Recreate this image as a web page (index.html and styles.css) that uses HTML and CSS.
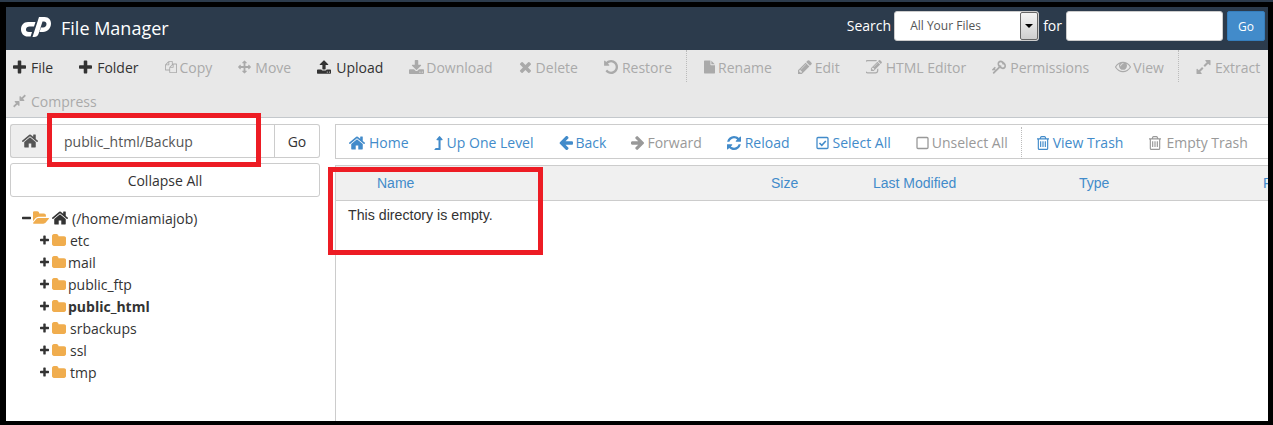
FILE: index.html
```html
<!DOCTYPE html>
<html lang="en">
<head>
<meta charset="utf-8">
<title>File Manager</title>
<link rel="stylesheet" href="styles.css">
</head>
<body>
<svg class="defs" aria-hidden="true">
<symbol id="plus" viewBox="192 128 1408 1408"><path d="M1600 736v192q0 40-28 68t-68 28h-416v416q0 40-28 68t-68 28h-192q-40 0-68-28t-28-68v-416h-416q-40 0-68-28t-28-68v-192q0-40 28-68t68-28h416v-416q0-40 28-68t68-28h192q40 0 68 28t28 68v416h416q40 0 68 28t28 68z"/></symbol>
<symbol id="minus" viewBox="192 640 1408 384"><path d="M1600 736v192q0 40-28 68t-68 28h-1216q-40 0-68-28t-28-68v-192q0-40 28-68t68-28h1216q40 0 68 28t28 68z"/></symbol>
<symbol id="home" viewBox="96 256 1600 1280"><path d="M1472 992v480q0 26-19 45t-45 19h-384v-384h-256v384h-384q-26 0-45-19t-19-45v-480q0-1 .5-3t.5-3l575-474 575 474q1 2 1 6zm223-69l-62 74q-8 9-21 11h-3q-13 0-21-7l-692-577-692 577q-12 8-24 7-13-2-21-11l-62-74q-8-10-7-23.500t11-21.500l719-599q32-26 76-26t76 26l244 204v-195q0-14 9-23t23-9h192q14 0 23 9t9 23v408l219 182q10 8 11 21.500t-7 23.500z"/></symbol>
<symbol id="folder" viewBox="64 128 1664 1408"><path d="M1728 608v704q0 92-66 158t-158 66h-1216q-92 0-158-66t-66-158v-960q0-92 66-158t158-66h320q92 0 158 66t66 158v32h672q92 0 158 66t66 158z"/></symbol>
<symbol id="folder-open" viewBox="0 192 1820 1408"><path d="M1815 952q0 31-31 66l-336 396q-43 51-120.500 86.500t-143.500 35.500h-1088q-34 0-60.500-13t-26.500-43q0-31 31-66l336-396q43-51 120.500-86.500t143.500-35.500h1088q34 0 60.500 13t26.500 43zm-343-344v160h-832q-94 0-197 47.500t-164 119.500l-337 396-5 6q0-4-.5-12.500t-.500-12.500v-960q0-92 66-158t158-66h320q92 0 158 66t66 158v32h544q92 0 158 66t66 158z"/></symbol>
<symbol id="files" viewBox="0 0 1792 1792"><path d="M1696 384q40 0 68 28t28 68v1216q0 40-28 68t-68 28h-960q-40 0-68-28t-28-68v-288h-544q-40 0-68-28t-28-68v-672q0-40 20-88t48-76l408-408q28-28 76-48t88-20h416q40 0 68 28t28 68v328q68-40 128-40h416zm-544 213l-299 299h299v-299zm-640-384l-299 299h299v-299zm196 647l316-316v-416h-384v416q0 40-28 68t-68 28h-416v640h512v-256q0-40 20-88t48-76zm956 804v-1152h-384v416q0 40-28 68t-68 28h-416v640h896z"/></symbol>
<symbol id="arrows" viewBox="0 0 1792 1792"><path d="M1792 896q0 26-19 45l-256 256q-19 19-45 19t-45-19-19-45v-128h-384v384h128q26 0 45 19t19 45-19 45l-256 256q-19 19-45 19t-45-19l-256-256q-19-19-19-45t19-45 45-19h128v-384h-384v128q0 26-19 45t-45 19-45-19l-256-256q-19-19-19-45t19-45l256-256q19-19 45-19t45 19 19 45v128h384v-384h-128q-26 0-45-19t-19-45 19-45l256-256q19-19 45-19t45 19l256 256q19 19 19 45t-19 45-45 19h-128v384h384v-128q0-26 19-45t45-19 45 19l256 256q19 19 19 45z"/></symbol>
<symbol id="upload" viewBox="64 64 1664 1600"><path d="M1344 1472q0-26-19-45t-45-19-45 19-19 45 19 45 45 19 45-19 19-45zm256 0q0-26-19-45t-45-19-45 19-19 45 19 45 45 19 45-19 19-45zm128-224v320q0 40-28 68t-68 28h-1472q-40 0-68-28t-28-68v-320q0-40 28-68t68-28h427q21 56 70.500 92t110.500 36h256q61 0 110.500-36t70.500-92h427q40 0 68 28t28 68zm-325-648q-17 40-59 40h-256v448q0 26-19 45t-45 19h-256q-26 0-45-19t-19-45v-448h-256q-42 0-59-40-17-39 14-69l448-448q18-19 45-19t45 19l448 448q31 30 14 69z"/></symbol>
<symbol id="download" viewBox="64 0 1664 1536"><path d="M1344 1344q0-26-19-45t-45-19-45 19-19 45 19 45 45 19 45-19 19-45zm256 0q0-26-19-45t-45-19-45 19-19 45 19 45 45 19 45-19 19-45zm128-224v320q0 40-28 68t-68 28h-1472q-40 0-68-28t-28-68v-320q0-40 28-68t68-28h465l135 136q58 56 136 56t136-56l136-136h464q40 0 68 28t28 68zm-325-569q17 41-14 70l-448 448q-18 19-45 19t-45-19l-448-448q-31-29-14-70 17-39 59-39h256v-448q0-26 19-45t45-19h256q26 0 45 19t19 45v448h256q42 0 59 39z"/></symbol>
<symbol id="times" viewBox="202 242 1288 1312"><path d="M1490 1322q0 40-28 68l-136 136q-28 28-68 28t-68-28l-294-294-294 294q-28 28-68 28t-68-28l-136-136q-28-28-28-68t28-68l294-294-294-294q-28-28-28-68t28-68l136-136q28-28 68-28t68 28l294 294 294-294q28-28 68-28t68 28l136 136q28 28 28 68t-28 68l-294 294 294 294q28 28 28 68z"/></symbol>
<symbol id="undo" viewBox="120 128 1544 1536"><path d="M1664 896q0 156-61 298t-164 245-245 164-298 61q-172 0-327-72.500t-264-204.500q-7-10-6.500-22.500t8.500-20.500l137-138q10-9 25-9 16 2 23 12 73 95 179 147t225 52q104 0 198.500-40.500t163.500-109.500 109.500-163.500 40.500-198.500-40.500-198.500-109.500-163.500-163.500-109.500-198.500-40.500q-98 0-188 35.500t-160 101.500l137 138q31 30 14 69-17 40-59 40h-448q-26 0-45-19t-19-45v-448q0-42 40-59 39-17 69 14l130 129q107-101 244.500-156.500t284.500-55.500q156 0 298 61t245 164 164 245 61 298z"/></symbol>
<symbol id="file" viewBox="128 0 1536 1792"><path d="M1152 512v-472q22 14 36 28l408 408q14 14 28 36h-472zm-128 32q0 40 28 68t68 28h544v1056q0 40-28 68t-68 28h-1344q-40 0-68-28t-28-68v-1600q0-40 28-68t68-28h800v544z"/></symbol>
<symbol id="pencil" viewBox="128 128 1536 1536"><path d="M491 1536l91-91-235-235-91 91v107h128v128h107zm523-928q0-22-22-22-10 0-17 7l-542 542q-7 7-7 17 0 22 22 22 10 0 17-7l542-542q7-7 7-17zm-54-192l416 416-832 832h-416v-416zm683 96q0 53-37 90l-166 166-416-416 166-165q36-38 90-38 53 0 91 38l235 234q37 39 37 91z"/></symbol>
<symbol id="edit" viewBox="128 192 1664 1344"><path d="M888 1184l116-116-152-152-116 116v56h96v96h56zm440-720q-16-16-33 1l-350 350q-17 17-1 33t33-1l350-350q17-17 1-33zm80 594v190q0 119-84.500 203.500t-203.500 84.500h-832q-119 0-203.500-84.500t-84.500-203.500v-832q0-119 84.500-203.500t203.500-84.500h832q63 0 117 25 15 7 18 23 3 17-9 29l-49 49q-14 14-32 8-23-6-45-6h-832q-66 0-113 47t-47 113v832q0 66 47 113t113 47h832q66 0 113-47t47-113v-126q0-13 9-22l64-64q15-15 35-7t20 29zm-96-738l288 288-672 672h-288v-288zm444 132l-92 92-288-288 92-92q28-28 68-28t68 28l152 152q28 28 28 68t-28 68z"/></symbol>
<symbol id="key" viewBox="0 128 1683 1536"><path transform="matrix(-1 0 0 1 1683 0)" d="M832 512q0-80-56-136t-136-56-136 56-56 136q0 42 19 83-41-19-83-19-80 0-136 56t-56 136 56 136 136 56 136-56 56-136q0-42-19-83 41 19 83 19 80 0 136-56t56-136zm851 704q0 17-49 66t-66 49q-9 0-28.500-16t-36.500-33-38.500-40-24.500-26l-96 96 220 220q28 28 28 68 0 42-39 81t-81 39q-40 0-68-28l-671-671q-176 131-365 131-163 0-265.500-102.500t-102.500-265.500q0-160 95-313t248-248 313-95q163 0 265.500 102.500t102.500 265.500q0 189-131 365l355 355 96-96q-2-2-26-24.500t-40-38.500-33-36.500-16-28.500q0-17 49-66t66-49q13 0 23 10 6 6 46 44.500t82 79.500 86.500 86 73 78 28.500 41z"/></symbol>
<symbol id="eye" viewBox="0 384 1792 1152"><path d="M1664 960q-152-236-381-353 61 104 61 225 0 185-131.500 316.500t-316.500 131.500-316.500-131.500-131.500-316.500q0-121 61-225-229 117-381 353 133 205 333.500 326.500t434.500 121.500 434.500-121.500 333.500-326.500zm-720-384q0-20-14-34t-34-14q-125 0-214.500 89.500t-89.500 214.500q0 20 14 34t34 14 34-14 14-34q0-86 61-147t147-61q20 0 34-14t14-34zm848 384q0 34-20 69-140 230-376.500 368.500t-499.500 138.500-499.500-139-376.500-368q-20-35-20-69t20-69q140-229 376.500-368t499.500-139 499.500 139 376.500 368q20 35 20 69z"/></symbol>
<symbol id="expand" viewBox="128 128 1536 1536"><path d="M883 1056q0 13-10 23l-332 332 144 144q19 19 19 45t-19 45-45 19h-448q-26 0-45-19t-19-45v-448q0-26 19-45t45-19 45 19l144 144 332-332q10-10 23-10t23 10l114 114q10 10 10 23zm781-864v448q0 26-19 45t-45 19-45-19l-144-144-332 332q-10 10-23 10t-23-10l-114-114q-10-10-10-23t10-23l332-332-144-144q-19-19-19-45t19-45 45-19h448q26 0 45 19t19 45z"/></symbol>
<symbol id="compress" viewBox="128 128 1536 1536"><path d="M896 960v448q0 26-19 45t-45 19-45-19l-144-144-332 332q-10 10-23 10t-23-10l-114-114q-10-10-10-23t10-23l332-332-144-144q-19-19-19-45t19-45 45-19h448q26 0 45 19t19 45zm755-672q0 13-10 23l-332 332 144 144q19 19 19 45t-19 45-45 19h-448q-26 0-45-19t-19-45v-448q0-26 19-45t45-19 45 19l144 144 332-332q10-10 23-10t23 10l114 114q10 10 10 23z"/></symbol>
<symbol id="level-up" viewBox="368 32 1040 1728"><path d="M1395 508q-17 36-58 36h-192v1184q0 14-9 23t-23 9h-704q-21 0-29-18-8-20 4-35l160-192q9-11 25-11h320v-960h-192q-40 0-58-37-17-37 9-68l320-384q18-22 49-22t49 22l320 384q27 32 9 69z"/></symbol>
<symbol id="arrow-left" viewBox="128 256 1536 1408"><path d="M1664 896v128q0 53-32.500 90.500t-84.500 37.500h-704l293 294q38 36 38 90t-38 90l-75 76q-37 37-90 37-52 0-91-37l-651-652q-37-37-37-90 0-52 37-91l651-650q38-38 91-38 52 0 90 38l75 74q38 38 38 91t-38 91l-293 293h704q52 0 84.500 37.500t32.500 90.500z"/></symbol>
<symbol id="arrow-right" viewBox="128 256 1472 1408"><path d="M1600 960q0 54-37 91l-651 651q-39 37-91 37-51 0-90-37l-75-75q-38-38-38-91t38-91l293-293h-704q-52 0-84.500-37.500t-32.500-90.500v-128q0-53 32.500-90.500t84.500-37.500h704l-293-294q-38-36-38-90t38-90l75-75q38-38 90-38 53 0 91 38l651 651q37 35 37 90z"/></symbol>
<symbol id="refresh" viewBox="128 128 1536 1536"><path d="M1639 1056q0 5-1 7-64 268-268 434.500t-478 166.500q-146 0-282.500-55t-243.500-157l-129 129q-19 19-45 19t-45-19-19-45v-448q0-26 19-45t45-19h448q26 0 45 19t19 45-19 45l-137 137q71 66 161 102t187 36q134 0 250-65t186-179q11-17 53-117 8-23 30-23h192q13 0 22.500 9.500t9.500 22.500zm25-800v448q0 26-19 45t-45 19h-448q-26 0-45-19t-19-45 19-45l138-138q-148-137-349-137-134 0-250 65t-186 179q-11 17-53 117-8 23-30 23h-199q-13 0-22.500-9.500t-9.500-22.500v-7q65-268 270-434.500t480-166.500q146 0 284 55.500t245 156.500l130-129q19-19 45-19t45 19 19 45z"/></symbol>
<symbol id="trash" viewBox="256 128 1280 1536"><path d="M704 736v576q0 14-9 23t-23 9h-64q-14 0-23-9t-9-23v-576q0-14 9-23t23-9h64q14 0 23 9t9 23zm256 0v576q0 14-9 23t-23 9h-64q-14 0-23-9t-9-23v-576q0-14 9-23t23-9h64q14 0 23 9t9 23zm256 0v576q0 14-9 23t-23 9h-64q-14 0-23-9t-9-23v-576q0-14 9-23t23-9h64q14 0 23 9t9 23zm128 724v-948h-896v948q0 22 7 40.500t14.500 27 10.500 8.500h832q3 0 10.500-8.500t14.500-27 7-40.500zm-672-1076h448l-48-117q-7-9-17-11h-317q-10 2-17 11zm928 32v64q0 14-9 23t-23 9h-96v948q0 83-47 143.500t-113 60.500h-832q-66 0-113-58.500t-47-141.500v-952h-96q-14 0-23-9t-9-23v-64q0-14 9-23t23-9h309l70-167q15-37 54-63t79-26h320q40 0 79 26t54 63l70 167h309q14 0 23 9t9 23z"/></symbol>
<symbol id="square" viewBox="0 0 13 13"><rect x="1" y="1" width="11" height="11" rx="1" fill="none" stroke="currentColor" stroke-width="1.300"/></symbol>
<symbol id="check-square" viewBox="0 0 13 13"><rect x="1" y="1" width="11" height="11" rx="1" fill="none" stroke="currentColor" stroke-width="1.300"/><path d="M3.500 6.500l2.300 2.300 4-4.300" fill="none" stroke="currentColor" stroke-width="1.600"/></symbol>
</svg>
<div class="strip"></div>
<div class="shot">
  <header class="topbar">
    <svg class="logo" viewBox="0 0 30 20" aria-label="cPanel"><path d="M14.500 5H7C2.500 5 0 8.500 0 12.300 0 16.300 2.500 19.600 7 19.600H9.600L11 15H8C5.800 15 4.700 13.700 5 12.200 5.300 10.600 6.500 9.500 8.500 9.500H13Z"/><path d="M18 0H23.500C28 0 30 3 30 6.500 30 11 26.500 15 22 15H18.500L20 10.500H22C24 10.500 25.500 9 25.500 7 25.500 5.500 24.500 4.500 23 4.500H21.500L17.500 17C16.800 19 15.500 20 13 20H11.500Z"/></svg>
    <h1 class="app-title">File Manager</h1>
    <form class="search">
      <label class="search-label">Search</label>
      <div class="picker"><span class="picker-value">All Your Files</span><span class="picker-btn"></span></div>
      <label class="search-label">for</label>
      <input class="search-input" type="text">
      <button class="go-primary" type="button">Go</button>
    </form>
  </header>
  <nav class="actions">
    <a class="act on"><svg class="ic w13 m5"><use href="#plus"/></svg>File</a>
    <a class="act on"><svg class="ic w13 m5"><use href="#plus"/></svg>Folder</a>
    <a class="act"><svg class="ic w12 m3"><use href="#files"/></svg>Copy</a>
    <a class="act"><svg class="ic w13 m4"><use href="#arrows"/></svg>Move</a>
    <a class="act on"><svg class="ic w14 m5"><use href="#upload"/></svg>Upload</a>
    <a class="act"><svg class="ic w15 m2"><use href="#download"/></svg>Download</a>
    <a class="act"><svg class="ic w12 m5"><use href="#times"/></svg>Delete</a>
    <a class="act act-last"><svg class="ic w14 m4"><use href="#undo"/></svg>Restore</a>
    <span class="dots"></span>
    <a class="act"><svg class="ic w11 m3"><use href="#file"/></svg>Rename</a>
    <a class="act"><svg class="ic w14 m3"><use href="#pencil"/></svg>Edit</a>
    <a class="act"><svg class="ic w16 m4"><use href="#edit"/></svg>HTML Editor</a>
    <a class="act"><svg class="ic w14 m4"><use href="#key"/></svg>Permissions</a>
    <a class="act act-last"><svg class="ic w16 m2"><use href="#eye"/></svg>View</a>
    <span class="dots"></span>
    <a class="act act-end"><svg class="ic w15 m4"><use href="#expand"/></svg>Extract</a>
    <a class="act"><svg class="ic w13 m5"><use href="#compress"/></svg>Compress</a>
  </nav>
  <div class="panes">
    <aside class="side">
      <div class="pathbar">
        <span class="path-home"><svg class="ic w16"><use href="#home"/></svg></span>
        <input class="path-input" type="text" value="public_html/Backup">
        <button class="path-go" type="button">Go</button>
      </div>
      <button class="collapse" type="button">Collapse All</button>
      <ul class="tree">
        <li class="root"><svg class="ic w9 m2"><use href="#minus"/></svg><svg class="ic w16 m3 amber"><use href="#folder-open"/></svg><svg class="ic w16 m4"><use href="#home"/></svg>(/home/miamiajob)</li>
        <li class="node"><svg class="ic w9 m3"><use href="#plus"/></svg><svg class="ic w14 m4 amber"><use href="#folder"/></svg>etc</li>
        <li class="node"><svg class="ic w9 m3"><use href="#plus"/></svg><svg class="ic w14 m2 amber"><use href="#folder"/></svg>mail</li>
        <li class="node"><svg class="ic w9 m3"><use href="#plus"/></svg><svg class="ic w14 m2 amber"><use href="#folder"/></svg>public_ftp</li>
        <li class="node current"><svg class="ic w9 m3"><use href="#plus"/></svg><svg class="ic w14 m2 amber"><use href="#folder"/></svg>public_html</li>
        <li class="node"><svg class="ic w9 m3"><use href="#plus"/></svg><svg class="ic w14 m4 amber"><use href="#folder"/></svg>srbackups</li>
        <li class="node"><svg class="ic w9 m3"><use href="#plus"/></svg><svg class="ic w14 m4 amber"><use href="#folder"/></svg>ssl</li>
        <li class="node"><svg class="ic w9 m3"><use href="#plus"/></svg><svg class="ic w14 m4 amber"><use href="#folder"/></svg>tmp</li>
      </ul>
    </aside>
    <main class="content">
      <nav class="navbar">
        <a class="nav on"><svg class="ic w16 m4"><use href="#home"/></svg>Home</a>
        <a class="nav on"><svg class="ic w9 m4"><use href="#level-up"/></svg>Up One Level</a>
        <a class="nav on"><svg class="ic w14 m3"><use href="#arrow-left"/></svg>Back</a>
        <a class="nav"><svg class="ic w13 m3"><use href="#arrow-right"/></svg>Forward</a>
        <a class="nav nav-reload on"><svg class="ic w14 m4"><use href="#refresh"/></svg>Reload</a>
        <a class="nav on"><svg class="ic w13 m4"><use href="#check-square"/></svg>Select All</a>
        <a class="nav nav-last"><svg class="ic w13 m3"><use href="#square"/></svg>Unselect All</a>
        <span class="dots nav-dots"></span>
        <a class="nav nav-trash on"><svg class="ic w12 m4"><use href="#trash"/></svg>View Trash</a>
        <a class="nav"><svg class="ic w12 m5"><use href="#trash"/></svg>Empty Trash</a>
      </nav>
      <div class="listing">
        <div class="thead">
          <span class="col col-name">Name</span>
          <span class="col col-size">Size</span>
          <span class="col col-date">Last Modified</span>
          <span class="col col-type">Type</span>
          <span class="col col-perm">Permissions</span>
        </div>
        <p class="empty">This directory is empty.</p>
      </div>
    </main>
  </div>
  <div class="mark mark-path"></div>
  <div class="mark mark-list"></div>
</div>
</body>
</html>
```

FILE: styles.css
```css
* { box-sizing: border-box; }
html, body { margin: 0; height: 425px; overflow: hidden; }
body { background: #000; font-family: "Open Sans", sans-serif; font-size: 14px; color: #333; }
.defs { display: none; }
.strip { height: 2px; background: #2c3b4c; }
.shot {
  position: relative;
  height: 423px;
  background: #fff;
  border-style: solid;
  border-color: #000;
  border-width: 5px 5px 4px 6px;
  display: flex;
  flex-direction: column;
  overflow: hidden;
}
.ic { height: 14px; fill: currentColor; flex: none; vertical-align: -2px; display: inline-block; }
.w9 { width: 9px; } .w11 { width: 11px; } .w12 { width: 12px; } .w13 { width: 13px; }
.w14 { width: 14px; } .w15 { width: 15px; } .w16 { width: 16px; }
.m2 { margin-right: 2px; } .m3 { margin-right: 3px; } .m4 { margin-right: 4px; } .m5 { margin-right: 5px; }
.amber { color: #f0ad4e; }

.topbar { height: 43px; flex: none; background: #2c3b4c; display: flex; align-items: center; color: #fff; padding-left: 15px; }
.logo { width: 30px; height: 20px; fill: #fff; margin: 0 10px 3px 0; }
.app-title { font-size: 18px; font-weight: 400; margin: 0 0 2px; }
.search { margin-left: auto; display: flex; align-items: center; padding: 0 3px 5px 0; }
.search-label { font-size: 14px; margin-bottom: 2px; }
.picker { width: 145px; height: 30px; margin: 0 4px 0 3px; background: #fff; border: 1px solid #ccc; border-radius: 3px; display: flex; align-items: stretch; color: #555; font-size: 12px; }
.picker-value { flex: 1; padding-left: 15px; line-height: 28px; }
.picker-btn { width: 18px; background: linear-gradient(#f4f4f4, #cfcfcf); border: 1px solid #666; border-radius: 2px; position: relative; }
.picker-btn::after { content: ""; position: absolute; left: 4px; top: 11px; border: 4px solid transparent; border-top: 4px solid #000; border-bottom: 0; }
.search-input { width: 157px; height: 30px; margin-left: 4px; border: 1px solid #ccc; border-radius: 3px; background: #fff; padding: 0; }
.go-primary { width: 38px; height: 30px; margin-left: 4px; border: 1px solid #357ebd; border-radius: 2px; background: #428bca; color: #fff; font: 12px "Open Sans", sans-serif; padding: 0; }

.actions { height: 68px; flex: none; background: #e8e8e8; border-bottom: 1px solid #c4c8cc; padding-left: 7px; display: flex; flex-wrap: wrap; align-content: flex-start; color: #aaa; }
.act { height: 34px; display: flex; align-items: center; margin-right: 26px; white-space: nowrap; }
.act.on { color: #333; }
.act-last { margin-right: 14px; }
.act-end { margin-right: 0; }
.dots { width: 1px; height: 32px; border-left: 1px dotted #bbb; margin-right: 17px; }

.panes { flex: 1; display: flex; min-height: 0; }
.side { width: 329px; flex: none; padding: 6px 15px 0 4px; }
.pathbar { display: flex; height: 34px; }
.path-home { width: 38px; background: #eee; border: 1px solid #ccc; border-right: 0; border-radius: 3px 0 0 3px; color: #555; display: flex; align-items: center; justify-content: center; }
.path-input { flex: 1; min-width: 0; border: 1px solid #ccc; background: #fff; color: #555; font: 14px "Open Sans", sans-serif; padding: 0 0 0 15px; }
.path-go { width: 45px; background: #fff; border: 1px solid #ccc; border-left: 0; border-radius: 0 3px 3px 0; font: 14px "Open Sans", sans-serif; color: #333; padding: 0; }
.collapse { display: block; width: 100%; height: 34px; margin-top: 5px; background: #fff; border: 1px solid #ccc; border-radius: 3px; font: 14px "Open Sans", sans-serif; color: #333; padding: 0; }
.tree { list-style: none; margin: 10px 0 0; padding: 0 0 0 12px; }
.tree li { height: 22px; display: flex; align-items: center; white-space: nowrap; }
.node { padding-left: 18px; }
.current { font-weight: 700; }

.content { flex: 1; min-width: 0; overflow: hidden; padding-top: 6px; }
.navbar { height: 35px; border: 1px solid #ccc; border-right: 0; padding: 2px 0 0 13px; display: flex; align-items: center; color: #999; }
.nav { display: flex; align-items: center; margin-right: 25px; white-space: nowrap; flex: none; }
.nav.on { color: #428bca; }
.nav-reload { margin-right: 26px; }
.nav-trash { margin-right: 26px; }
.nav-last { margin-right: 13px; }
.nav-dots { margin-right: 15px; flex: none; }
.listing { margin-top: 6px; border-left: 1px solid #ccc; height: 300px; font-family: "Liberation Sans", Arial, sans-serif; }
.thead { height: 36px; background: #f0f0f0; border-top: 1px solid #ccc; border-bottom: 1px solid #ccc; display: flex; align-items: center; padding-left: 41px; color: #428bca; white-space: nowrap; }
.col { flex: none; }
.col-name { width: 394px; }
.col-size { width: 102px; }
.col-date { width: 206px; }
.col-type { width: 184px; }
.empty { margin: 6px 0 0 12px; line-height: 16px; color: #333; font-size: 14.2px; }

.mark { position: absolute; border: 5px solid #ed1c24; pointer-events: none; }
.mark-path { left: 41px; top: 106px; width: 214px; height: 54px; }
.mark-list { left: 322px; top: 160px; width: 215px; height: 88px; }
```
